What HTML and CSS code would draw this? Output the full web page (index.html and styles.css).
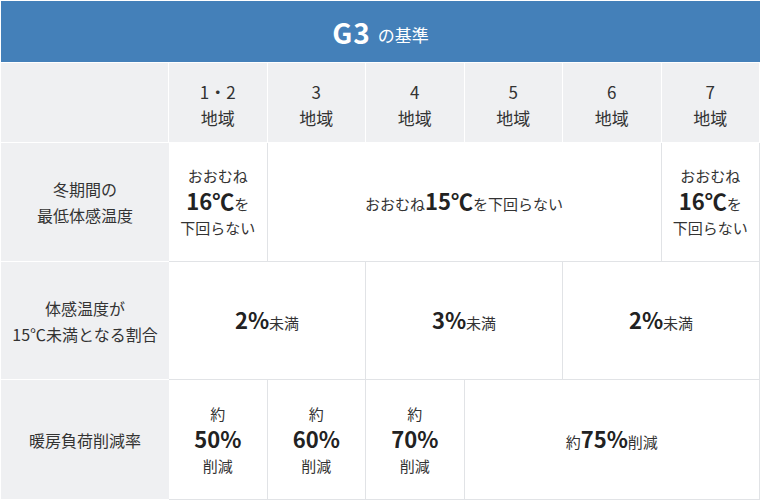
FILE: index.html
```html
<!DOCTYPE html>
<html lang="ja">
<head>
<meta charset="utf-8">
<link rel="stylesheet" href="styles.css">
</head>
<body>
<div class="table">
  <div class="title"><span class="title-main">G3</span><span class="title-sub">の基準</span></div>
  <div class="grid">
    <div class="th corner"></div>
    <div class="th col"><span>1・2</span><span>地域</span></div>
    <div class="th col"><span>3</span><span>地域</span></div>
    <div class="th col"><span>4</span><span>地域</span></div>
    <div class="th col"><span>5</span><span>地域</span></div>
    <div class="th col"><span>6</span><span>地域</span></div>
    <div class="th col"><span>7</span><span>地域</span></div>

    <div class="th rowh r1"><span>冬期間の</span><span>最低体感温度</span></div>
    <div class="td r1 stack"><span>おおむね</span><span><b>16℃</b>を</span><span>下回らない</span></div>
    <div class="td r1 span4 inline"><span>おおむね<b>15℃</b>を下回らない</span></div>
    <div class="td r1 stack"><span>おおむね</span><span><b>16℃</b>を</span><span>下回らない</span></div>

    <div class="th rowh r2"><span>体感温度が</span><span>15℃未満となる割合</span></div>
    <div class="td r2 span2 inline"><span><b>2%</b>未満</span></div>
    <div class="td r2 span2 inline"><span><b>3%</b>未満</span></div>
    <div class="td r2 span2 inline"><span><b>2%</b>未満</span></div>

    <div class="th rowh r3"><span>暖房負荷削減率</span></div>
    <div class="td r3 stack"><span>約</span><span><b>50%</b></span><span>削減</span></div>
    <div class="td r3 stack"><span>約</span><span><b>60%</b></span><span>削減</span></div>
    <div class="td r3 stack"><span>約</span><span><b>70%</b></span><span>削減</span></div>
    <div class="td r3 span3 inline"><span>約<b>75%</b>削減</span></div>
  </div>
</div>
</body>
</html>
```

FILE: styles.css
```css
* { box-sizing: border-box; }
html, body { margin: 0; padding: 0; background: #fff; }
body {
  font-family: "Noto Sans CJK JP", "Noto Sans", sans-serif;
  color: #333;
}
.table {
  margin: 1px 0 0 1px;
  width: 759px;
}
.title {
  height: 62px;
  background: #4480b9;
  border-bottom: 1px solid #fff;
  display: flex;
  align-items: center;
  justify-content: center;
  color: #fff;
}
.title-main {
  font-size: 28px;
  font-weight: 700;
  letter-spacing: 1px;
}
.title-sub {
  font-size: 17px;
  margin-left: 7px;
  margin-top: 5px;
}
.grid {
  display: grid;
  grid-template-columns: 168px repeat(6, 1fr);
  grid-template-rows: 80px 119px 118px 120px;
}
.th, .td {
  display: flex;
  flex-direction: column;
  align-items: center;
  justify-content: center;
  text-align: center;
}
.th {
  background: #eff0f2;
  border-right: 1px solid #fff;
  border-bottom: 1px solid #fff;
}
.th.rowh {
  border-right: 0;
  font-size: 16px;
  line-height: 26px;
}
.th.col {
  font-size: 17px;
  line-height: 26px;
  padding-top: 5px;
}
.td {
  background: #fff;
  border-right: 1px solid #e1e3e6;
  border-bottom: 1px solid #e1e3e6;
  font-size: 15px;
}
.stack { line-height: 24px; }
.inline { line-height: 30px; }
.td b {
  font-size: 22px;
  font-weight: 700;
  color: #222;
}
.span2 { grid-column: span 2; }
.span3 { grid-column: span 3; }
.span4 { grid-column: span 4; }
```
